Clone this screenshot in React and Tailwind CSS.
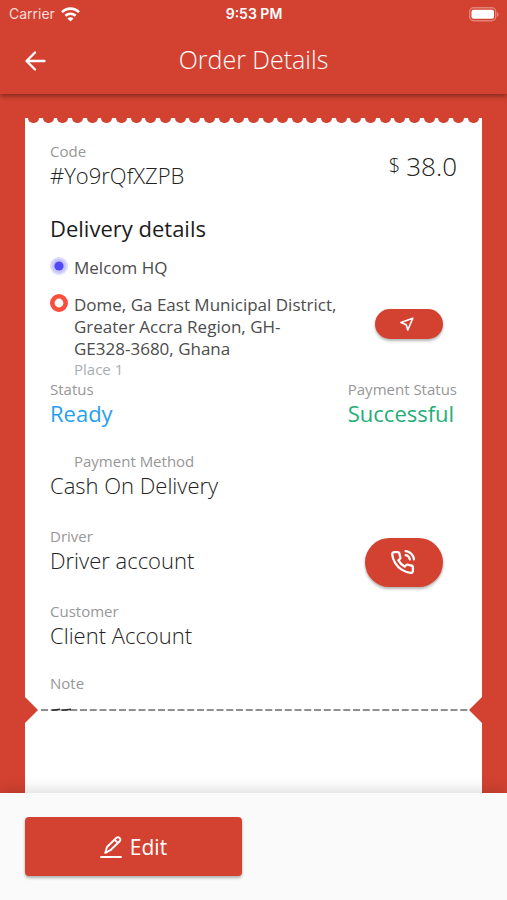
import { FiPhoneCall } from "react-icons/fi";

const label = "text-[15px] leading-5 font-normal text-[#979797]";
const value = "text-[22px] leading-7 text-[#222222]";

function Field({ name, children, nameClass = "", valueClass = "" }) {
  return (
    <div className="pb-0.5">
      <dt className={`${label} ${nameClass}`}>{name}</dt>
      <dd className={`${value} ${valueClass}`}>{children}</dd>
    </div>
  );
}

function StatusBar() {
  return (
    <div className="grid h-7 grid-cols-3 items-center pr-2 pl-[9px] font-[Inter] text-[14px] leading-4 text-white">
      <span className="flex items-center gap-1.5 font-normal text-[#f8dcd8]">
        Carrier
        <svg width="19" height="15" viewBox="0 0 19 15" fill="none" stroke="white" strokeWidth="2.6" aria-hidden="true">
          <path d="M1 5.2C5.8 .4 13.2 .4 18 5.2" />
          <path d="M4.4 8.8c2.9-2.8 7.3-2.8 10.2 0" />
          <path d="M9.5 14.5 6.4 11.4c1.8-1.5 4.4-1.5 6.2 0z" fill="white" stroke="none" />
        </svg>
      </span>
      <span className="text-center font-semibold">9:53 PM</span>
      <svg className="justify-self-end" width="30" height="15" viewBox="0 0 30 15" aria-hidden="true">
        <rect x=".7" y=".7" width="26" height="13" rx="4" fill="none" stroke="#e38278" strokeWidth="1.4" />
        <rect x="2.5" y="2.7" width="22.5" height="9" rx="2" fill="white" />
        <path d="M28 5c2 .8 2 4 0 5z" fill="#e38278" />
      </svg>
    </div>
  );
}

function Perforation() {
  return (
    <div className="flex justify-between px-[3px]" aria-hidden="true">
      {Array.from({ length: 31 }, (_, i) => (
        <span key={i} className="h-[5px] w-[11px] rounded-b-full bg-[#d34231]" />
      ))}
    </div>
  );
}

function TearLine() {
  return (
    <div className="flex h-[26px] items-center" aria-hidden="true">
      <svg width="13" height="26" viewBox="0 0 13 26"><path d="M0 0 13 13 0 26z" fill="#d34231" /></svg>
      <svg className="h-[26px] min-w-0 flex-1">
        <path d="M3 13H2000" stroke="#8f8f8f" strokeWidth="2" strokeDasharray="7 2.75" />
        <path d="M14 12.5 22 11.6v1.6l-8 .8zM24 12.5l9-.9v1.6l-9 .8z" fill="#333" />
      </svg>
      <svg width="13" height="26" viewBox="0 0 13 26"><path d="M13 0 0 13l13 13z" fill="#d34231" /></svg>
    </div>
  );
}

export default function App() {
  return (
    <div className="flex min-h-screen flex-col bg-[#d34231] font-['Open_Sans','Noto_Sans',sans-serif] font-light">
      <header className="bg-[#d34231] shadow-[0_2px_5px_rgba(0,0,0,0.4)]">
        <StatusBar />
        <div className="grid h-[66px] grid-cols-[70px_1fr_70px] items-center">
          <button type="button" aria-label="Back" className="flex h-full items-center pl-[25px]">
            <svg width="21" height="20" viewBox="0 0 21 20" fill="none" stroke="white" strokeWidth="2.3" strokeLinecap="round" strokeLinejoin="round">
              <path d="M19.5 10H2M10 1.5 1.5 10l8.5 8.5" />
            </svg>
          </button>
          <h1 className="pb-1 text-center text-[25px] leading-8 text-white">Order Details</h1>
        </div>
      </header>

      <main className="mt-6 flex flex-1 flex-col px-[25px]">
        <div className="flex flex-1 flex-col bg-white">
          <Perforation />
          <section className="px-[25px] pt-[18px]">
            <dl className="flex items-center justify-between">
              <Field name="Code">#Yo9rQfXZPB</Field>
              <dd className="flex items-center gap-1.5 text-[26px] leading-8 text-[#222222]">
                <span className="text-[20px]">$</span>38.0
              </dd>
            </dl>

            <h2 className="mt-[22px] text-[22px] leading-[30px] font-medium text-[#1c1c1c]">Delivery details</h2>
            <ul className="mt-3.5 text-[17px] leading-[22px] font-normal text-[#4c4c4c]">
              <li className="flex gap-1.5">
                <svg width="18" height="18" viewBox="0 0 18 18" aria-hidden="true">
                  <circle cx="9" cy="9" r="9" fill="#dcdafd" />
                  <circle cx="9" cy="9" r="7" fill="#c6c4fb" />
                  <circle cx="9" cy="9" r="4.6" fill="#5148f5" />
                </svg>
                Melcom HQ
              </li>
              <li className="mt-[15px] flex items-start">
                <svg className="mr-1.5 shrink-0" width="18" height="18" viewBox="0 0 18 18" aria-hidden="true">
                  <circle cx="9" cy="9" r="6.7" fill="none" stroke="#fb4f3e" strokeWidth="4.6" />
                </svg>
                <div className="w-[280px]">
                  <p>Dome, Ga East Municipal District, Greater Accra Region, GH-<span className="inline-block">GE328-3680,</span> Ghana</p>
                  <p className="text-[15px] leading-[19px] text-[#a9adb5]">Place 1</p>
                </div>
                <button type="button" aria-label="Navigate" className="mt-[15px] mr-[14px] ml-auto flex h-[30px] w-[68px] items-center justify-center rounded-full bg-[#d34231] pr-1 shadow-[0_2px_3px_rgba(0,0,0,0.3)]">
                  <svg width="14" height="14" viewBox="0 0 14 14" fill="none" stroke="white" strokeWidth="1.6" strokeLinejoin="round">
                    <path d="M12.8 1.2 1 5.6l5.2 2.2 1.6 5.2z" />
                  </svg>
                </button>
              </li>
            </ul>

            <dl>
              <div className="flex justify-between">
                <Field name="Status" valueClass="font-normal text-[#259ff2]!">Ready</Field>
                <Field name="Payment Status" valueClass="font-normal text-[#1fae78]!">Successful</Field>
              </div>
              <div className="mt-[22px]">
                <Field name="Payment Method" nameClass="pl-6">Cash On Delivery</Field>
              </div>
              <div className="mt-[25px] flex items-start justify-between">
                <Field name="Driver">Driver account</Field>
                <dd className="mt-3 mr-[14px] -mb-4">
                  <button type="button" aria-label="Call driver" className="flex h-[49px] w-[78px] items-center justify-center rounded-full bg-[#d34231] pr-1 text-white shadow-[0_2px_3px_rgba(0,0,0,0.3)]">
                    <FiPhoneCall size={25} className="stroke-[2.2]" />
                  </button>
                </dd>
              </div>
              <div className="mt-[25px]">
                <Field name="Customer">Client Account</Field>
              </div>
              <div className="mt-[22px]">
                <dt className={label}>Note</dt>
              </div>
            </dl>
          </section>
          <div className="mt-1"><TearLine /></div>
        </div>
      </main>

      <footer className="bg-[#fafafa] px-[25px] pt-6 pb-6 shadow-[0_-2px_14px_rgba(0,0,0,0.16)]">
        <button type="button" className="flex h-[59px] w-[217px] items-center justify-center gap-2 rounded bg-[#d34231] text-[21px] leading-[30px] font-normal text-white shadow-[0_2px_3px_rgba(0,0,0,0.3)]">
          <svg width="22" height="22" viewBox="0 0 22 22" fill="none" stroke="white" strokeWidth="1.9" strokeLinecap="round" strokeLinejoin="round" aria-hidden="true">
            <path d="M1 21h20M5.3 16.8 7 11 16.5 1.7c2-1.6 4.9 1.1 3.4 3.3L10.4 14.2zM14.8 3.8l3 3" />
          </svg>
          Edit
        </button>
      </footer>
    </div>
  );
}
